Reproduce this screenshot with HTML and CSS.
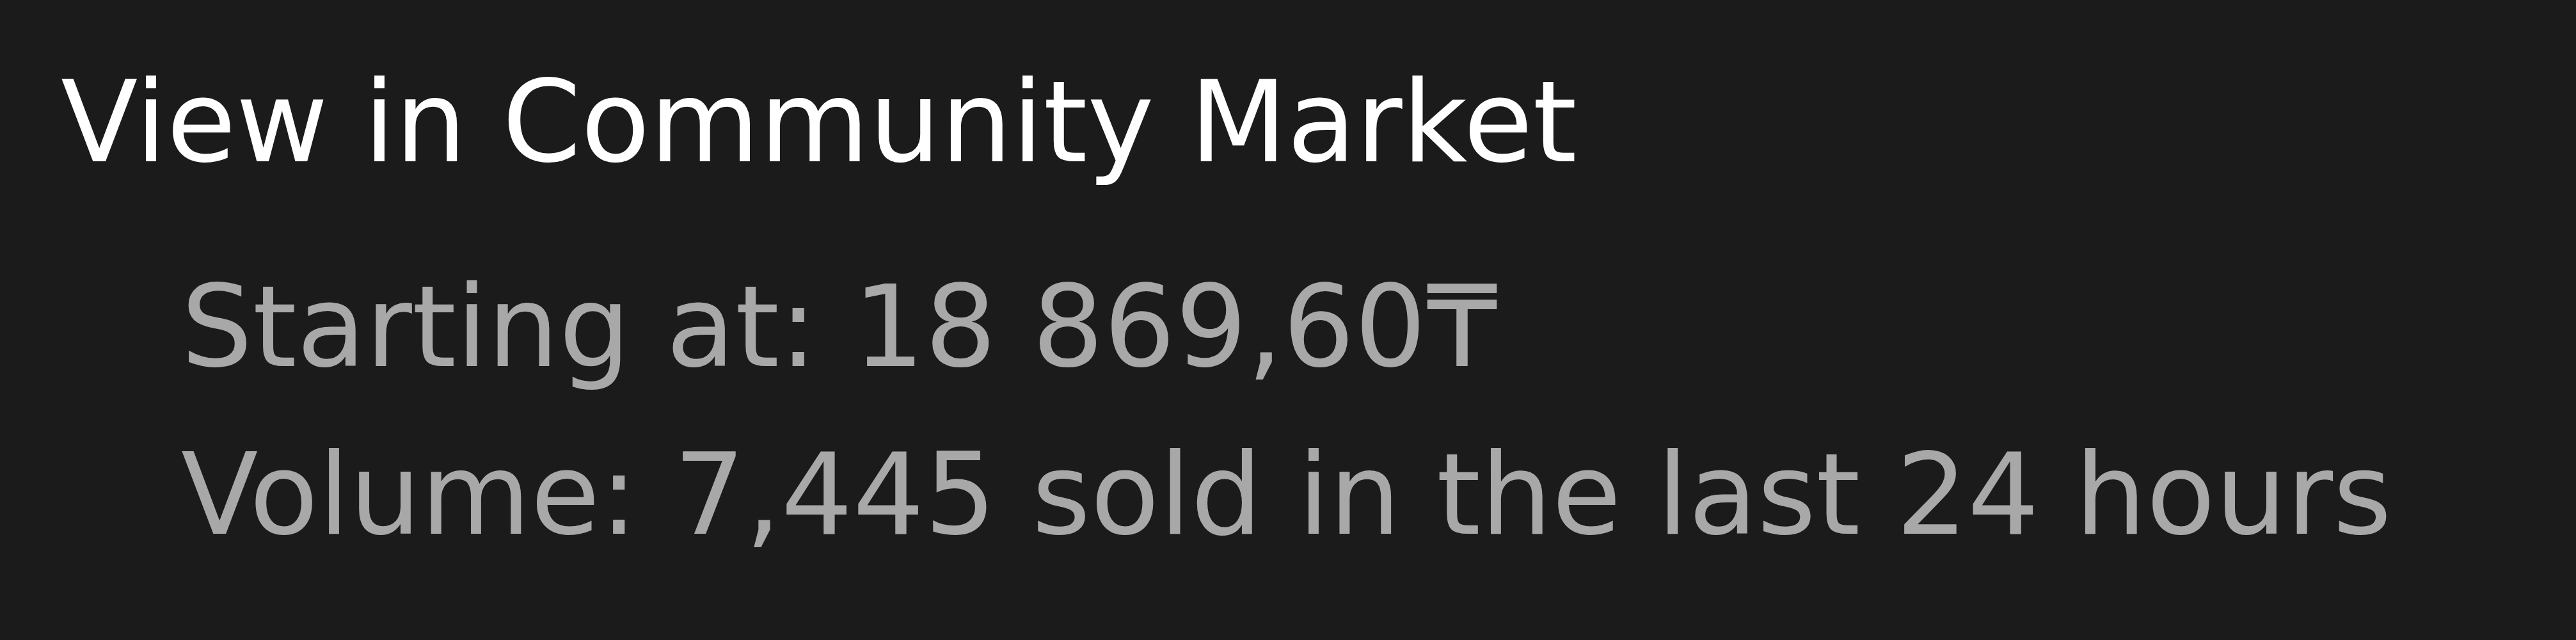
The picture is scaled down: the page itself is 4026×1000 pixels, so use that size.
FILE: index.html
```html
<!DOCTYPE html>
<html lang="en">
<head>
<meta charset="utf-8">
<title>Community Market</title>
<link rel="stylesheet" href="styles.css">
</head>
<body>
  <section class="market">
    <a class="market-link" href="#">View in Community Market</a>
    <div class="market-stats">
      <div class="stat">Starting at: 18 869,60₸</div>
      <div class="stat">Volume: 7,445 sold in the last 24 hours</div>
    </div>
  </section>
</body>
</html>
```
FILE: styles.css
```css
html, body {
  margin: 0;
  padding: 0;
  background: #1b1b1b;
}

body {
  width: 4026px;
  height: 1000px;
  overflow: hidden;
  font-family: "DejaVu Sans", Verdana, sans-serif;
  font-size: 176px;
  line-height: 262px;
}

.market {
  display: flex;
  flex-direction: column;
  padding: 61px 0 0 95px;
}

.market-link {
  color: #ffffff;
  text-decoration: none;
  margin-bottom: 58px;
  white-space: nowrap;
}

.market-stats {
  display: flex;
  flex-direction: column;
  padding-left: 188px;
  color: #a8a8a8;
}

.stat {
  white-space: nowrap;
}
```
